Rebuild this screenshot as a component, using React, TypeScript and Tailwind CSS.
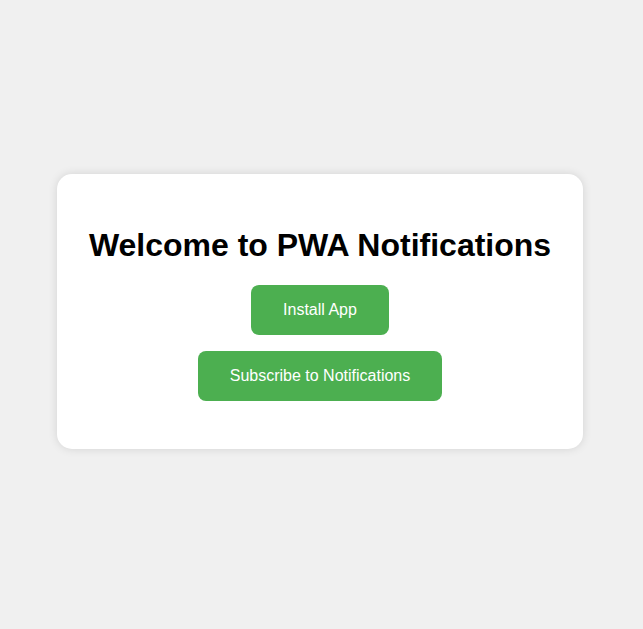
export default function App() {
  return (
    <div className="min-h-screen bg-[#f0f0f0] flex justify-center items-start pt-[174px] pr-[3px]" style={{ fontFamily: '"Liberation Sans", Arial, sans-serif' }}>
      <div className="w-[526px] bg-white rounded-[15px] shadow-[0_0_10px_rgba(0,0,0,0.12)] px-[32px] pt-[32px] pb-[48px] flex flex-col items-center">
        <h1 className="text-[32px] font-bold leading-[37px] my-[21px] text-black whitespace-nowrap">Welcome to PWA Notifications</h1>
        <button className="h-[50px] w-[138px] bg-[#4caf50] text-white text-[16px] rounded-[8px]">Install App</button>
        <button className="mt-[16px] h-[50px] w-[244px] bg-[#4caf50] text-white text-[16px] rounded-[8px]">Subscribe to Notifications</button>
      </div>
    </div>
  );
}
